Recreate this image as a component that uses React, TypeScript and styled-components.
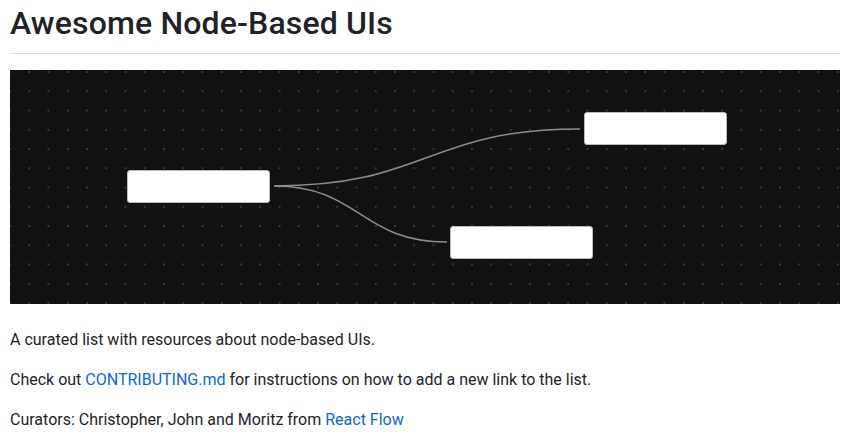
import React from 'react'
import styled, { createGlobalStyle } from 'styled-components'

const Global = createGlobalStyle`
  body {
    margin: 0;
    background: #ffffff;
    color: #1f2328;
    font-family: Roboto, "Liberation Sans", sans-serif;
    font-size: 16px;
    line-height: 1.5;
  }
`

const Page = styled.article`
  padding: 3px 16px 0 10px;
`

const Title = styled.h1`
  margin: 0 0 16px;
  padding-bottom: 9.6px;
  font-size: 32px;
  font-weight: 500;
  letter-spacing: 0.15px;
  line-height: 1.25;
  border-bottom: 1px solid #d8dee4;
`

const Canvas = styled.div`
  position: relative;
  height: 234px;
  margin-bottom: 24px;
  background-color: #111111;
  background-image: radial-gradient(circle, #3b3b3b 0.9px, transparent 1.1px);
  background-size: 19.26px 19.26px;
  background-position: -9.63px -7.63px;
  overflow: hidden;
`

const Edges = styled.svg`
  position: absolute;
  inset: 0;
  width: 100%;
  height: 100%;
`

const Node = styled.div<{ $x: number; $y: number }>`
  position: absolute;
  left: ${p => p.$x}px;
  top: ${p => p.$y}px;
  width: 143px;
  height: 33px;
  box-sizing: border-box;
  background: #ffffff;
  border: 1px solid #b9b9c4;
  border-radius: 3px;
`

const Para = styled.p`
  margin: 0 0 16px;
`

const Link = styled.a`
  color: #0969da;
  text-decoration: none;
`

// positions relative to canvas (canvas starts at 10,70)
const nodes = [
  { id: 'a', x: 117, y: 100 },
  { id: 'b', x: 574, y: 42 },
  { id: 'c', x: 440, y: 156 },
]

export default function App() {
  return (
    <Page>
      <Global />
      <Title>Awesome Node-Based UIs</Title>
      <Canvas>
        <Edges viewBox="0 0 830 234">
          <path d="M264 116 C417 116 417 59 570 59" fill="none" stroke="#8c8c8c" strokeWidth="1.5" />
          <path d="M264 116 C350 116 350 172 437 172" fill="none" stroke="#8c8c8c" strokeWidth="1.5" />
        </Edges>
        {nodes.map(n => (
          <Node key={n.id} $x={n.x} $y={n.y} />
        ))}
      </Canvas>
      <Para>A curated list with resources about node-based UIs.</Para>
      <Para>
        Check out <Link href="#">CONTRIBUTING.md</Link> for instructions on how to add a new link to the list.
      </Para>
      <Para>
        Curators: Christopher, John and Moritz from <Link href="#">React Flow</Link>
      </Para>
    </Page>
  )
}
